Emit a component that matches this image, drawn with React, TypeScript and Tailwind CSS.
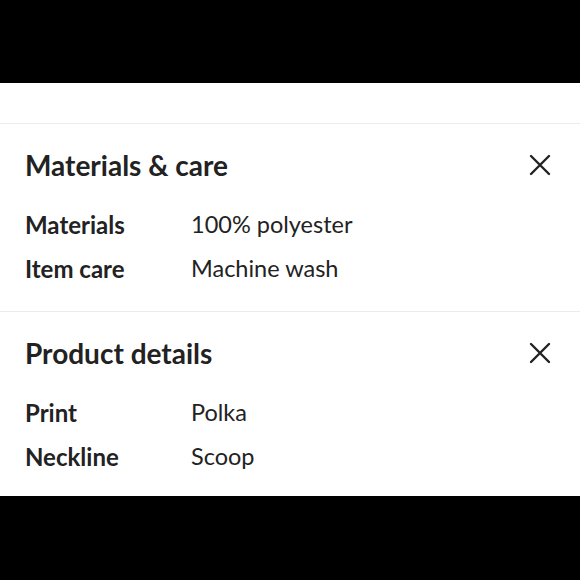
const sections = [
  {
    title: 'Materials & care',
    rows: [
      ['Materials', '100% polyester'],
      ['Item care', 'Machine wash'],
    ],
  },
  {
    title: 'Product details',
    rows: [
      ['Print', 'Polka'],
      ['Neckline', 'Scoop'],
    ],
  },
];

function CloseIcon() {
  return (
    <svg width="22" height="22" viewBox="0 0 22 22" fill="none" stroke="#222" strokeWidth="2.4" strokeLinecap="round">
      <path d="M2 2 L20 20 M20 2 L2 20" />
    </svg>
  );
}

export default function App() {
  return (
    <div className="w-[580px] h-[580px] bg-black flex flex-col" style={{ fontFamily: 'Lato, "Noto Sans", sans-serif' }}>
      <div className="h-[83px] shrink-0" />
      <div className="bg-white h-[413px] shrink-0 flex flex-col">
        <div className="h-[41px] border-b border-[#ececec]" />
        {sections.map((s, i) => (
          <div key={s.title} className={`px-[25px] pt-6 ${i === 0 ? 'pb-5 border-b border-[#ececec]' : ''}`}>
            <div className="flex items-center justify-between h-[34px] mb-[21px]">
              <h2 className="text-[28px] font-bold text-[#222] leading-[34px]">{s.title}</h2>
              <div className="mr-[4px]"><CloseIcon /></div>
            </div>
            {s.rows.map(([k, v]) => (
              <div key={k} className="flex h-[44px] items-center text-[#222]">
                <span className="w-[166px] font-bold text-[24px]">{k}</span>
                <span className="text-[23.5px]">{v}</span>
              </div>
            ))}
          </div>
        ))}
      </div>
    </div>
  );
}
